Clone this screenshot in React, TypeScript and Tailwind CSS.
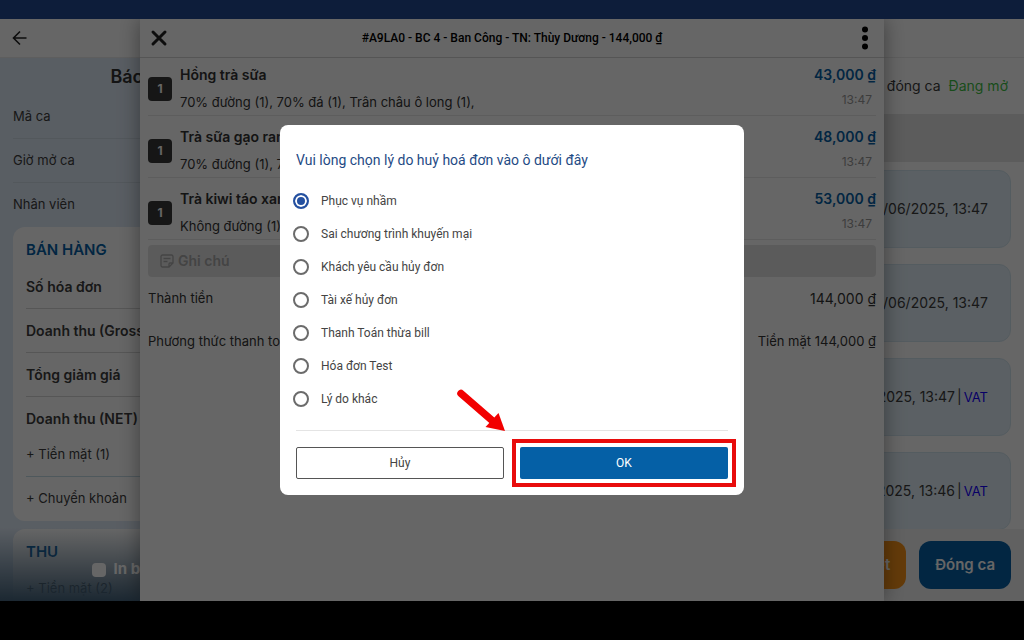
import React, { useState } from "react"

const ITEMS = [
  { name: "Hồng trà sữa", options: "70% đường (1), 70% đá (1), Trân châu ô long (1),", price: "43,000 ₫" },
  { name: "Trà sữa gạo rang", options: "70% đường (1), 70% đá (1),", price: "48,000 ₫" },
  { name: "Trà kiwi táo xanh", options: "Không đường (1),", price: "53,000 ₫" },
]

const REASONS = [
  "Phục vụ nhầm",
  "Sai chương trình khuyến mại",
  "Khách yêu cầu hủy đơn",
  "Tài xế hủy đơn",
  "Thanh Toán thừa bill",
  "Hóa đơn Test",
  "Lý do khác",
]

const INVOICES = [
  { id: 1, time: "23/06/2025, 13:47", vat: false },
  { id: 2, time: "23/06/2025, 13:47", vat: false },
  { id: 3, time: "23/06/2025, 13:47", vat: true },
  { id: 4, time: "23/06/2025, 13:46", vat: true },
]

const ShiftReport = () => (
  <section className="relative w-[316px] shrink-0 overflow-hidden bg-[#dfeaf7] px-[13px] text-[13px] text-[#3c3c3c]">
    <h1 className="flex h-[37px] items-center justify-center text-lg font-semibold text-[#333]">
      Báo cáo ca
    </h1>
    <div className="divide-y divide-[#cfdbe6]">
      {["Mã ca", "Giờ mở ca", "Nhân viên"].map((label) => (
        <div key={label} className="flex h-11 items-center">
          {label}
        </div>
      ))}
    </div>

    <div className="rounded-xl bg-white px-[13px]">
      <h2 className="flex h-[38px] items-end pb-1 text-[15px] font-semibold text-[#0560a6]">BÁN HÀNG</h2>
      <div className="divide-y divide-[#d8d8d8] text-sm font-semibold">
        {["Số hóa đơn", "Doanh thu (Gross)", "Tổng giảm giá"].map((label) => (
          <div key={label} className="flex h-11 items-center">
            {label}
          </div>
        ))}
        <div className="flex h-9 items-end pb-1">Doanh thu (NET)</div>
      </div>
      <div className="divide-y divide-[#c4dbe6]">
        <div className="flex h-11 items-center">+ Tiền mặt (1)</div>
        <div className="flex h-11 items-center">+ Chuyển khoản</div>
      </div>
    </div>

    <div className="mt-2 rounded-xl bg-white px-[13px]">
      <h2 className="flex h-[38px] items-end pb-1 text-[15px] font-semibold text-[#0560a6]">THU</h2>
      <div className="flex h-11 items-center">+ Tiền mặt (2)</div>
    </div>

    <div className="absolute inset-x-0 bottom-0 flex h-[73px] items-center justify-center bg-linear-to-b from-[#46647d]/0 to-[#46647d] pt-2.5">
      <label className="flex items-center gap-2 text-[15px] font-bold text-white">
        <input type="checkbox" className="size-3.5 appearance-none rounded-sm bg-white" />
        In báo cáo món
      </label>
    </div>
  </section>
)

const InvoiceList = () => (
  <section className="flex min-w-0 flex-1 flex-col bg-white text-sm text-[#3c3c3c]">
    <div className="flex h-14 shrink-0 items-center justify-end gap-2 px-4">
      <span>Chưa đóng ca</span>
      <span className="text-[#3fbf45]">Đang mở</span>
    </div>
    <div className="h-12 shrink-0 bg-[#e6e6e6]" />
    <div className="flex min-h-0 flex-1 flex-col gap-4 overflow-hidden px-[13px] pt-2">
      {INVOICES.map((invoice) => (
        <div
          key={invoice.id}
          className="flex h-[78px] shrink-0 items-center justify-end gap-0.5 rounded-xl border border-[#d3e5f0] bg-[#e3f0f9] px-[22px]"
        >
          <span>{invoice.time}</span>
          {invoice.vat && <span>|</span>}
          {invoice.vat && (
            <a href="#vat" className="text-[13px] text-[#1500ff]">
              VAT
            </a>
          )}
        </div>
      ))}
    </div>
    <div className="flex h-[72px] shrink-0 items-center justify-end gap-[13px] bg-[#f3f3f3] px-[13px] text-[15px] font-semibold text-white">
      <button className="h-12 rounded-xl bg-[#fa9419] px-4">Chi tiết</button>
      <button className="h-12 rounded-xl bg-[#0560a6] px-4">Đóng ca</button>
    </div>
  </section>
)

const OrderDrawer = () => (
  <aside className="absolute inset-y-0 left-1/2 w-[744px] max-w-full -translate-x-1/2 bg-white text-[13px] text-[#333] shadow-[0_0_20px_rgba(0,0,0,0.4)]">
    <header className="flex h-[39px] items-center justify-between border-b border-[#d4d4d4] px-2.5">
      <button aria-label="Đóng">
        <svg className="size-[18px]" viewBox="0 0 18 18" fill="none" stroke="#222" strokeWidth="3" strokeLinecap="round">
          <path d="M3 3l12 12M15 3L3 15" />
        </svg>
      </button>
      <h2 className="font-[Roboto,sans-serif] text-xs font-medium text-black">
        #A9LA0 - BC 4 - Ban Công - TN: Thùy Dương - 144,000 ₫
      </h2>
      <button aria-label="Thêm">
        <svg className="h-6 w-[18px]" viewBox="0 0 18 24" fill="#000">
          <circle cx="9" cy="3.5" r="3" />
          <circle cx="9" cy="12" r="3" />
          <circle cx="9" cy="20.5" r="3" />
        </svg>
      </button>
    </header>

    <div className="-mt-1 px-2">
      {ITEMS.map((item) => (
        <div key={item.name} className="flex h-[62px] items-center gap-2 border-b border-[#e8e8e8] pt-2">
          <span className="flex size-6 items-center justify-center rounded bg-[#383838] text-xs font-bold text-white">
            1
          </span>
          <div className="flex flex-1 flex-col gap-[7px]">
            <div className="flex justify-between text-sm leading-5 font-semibold">
              <span>{item.name}</span>
              <span className="text-[#0560a6]">{item.price}</span>
            </div>
            <div className="flex justify-between leading-5">
              <span>{item.options}</span>
              <span className="pr-1 text-xs leading-4 text-[#999]">13:47</span>
            </div>
          </div>
        </div>
      ))}
      <div className="mt-[5px] flex h-8 items-center gap-1 rounded bg-[#e4e4e4] px-3 text-sm font-semibold text-[#aaa]">
        <svg className="size-3.5" viewBox="0 0 14 14" fill="none" stroke="currentColor" strokeWidth="1.3">
          <path d="M2.5 1h9A1.5 1.5 0 0 1 13 2.5V9l-4 4H2.5A1.5 1.5 0 0 1 1 11.5v-9A1.5 1.5 0 0 1 2.5 1zM13 9H10a1 1 0 0 0-1 1v3M3.5 4.5h7M3.5 7.5h4" />
        </svg>
        Ghi chú
      </div>
      <div className="flex h-[43px] items-center justify-between">
        <span>Thành tiền</span>
        <span className="text-sm">144,000 ₫</span>
      </div>
      <div className="flex h-[43px] items-center justify-between">
        <span>Phương thức thanh toán</span>
        <span>Tiền mặt 144,000 ₫</span>
      </div>
    </div>
  </aside>
)

const CancelDialog = () => {
  const [reason, setReason] = useState<string>(REASONS[0])

  return (
    <div
      role="dialog"
      aria-labelledby="cancel-title"
      className="relative w-[464px] rounded-lg bg-white p-4 font-[Roboto,sans-serif] text-[#444]"
    >
      <h2 id="cancel-title" className="pt-[9px] pb-[14px] text-sm leading-5 text-[#1f4b85]">
        Vui lòng chọn lý do huỷ hoá đơn vào ô dưới đây
      </h2>
      <div className="-ml-[3px] pb-[15px]">
        {REASONS.map((item) => (
          <label key={item} className="flex h-[33px] items-center gap-3 text-xs">
            <input
              type="radio"
              name="reason"
              checked={reason === item}
              onChange={() => setReason(item)}
              className="size-4 appearance-none rounded-full border-2 border-[#6b6b6b] checked:border-[#2450a0] checked:bg-[#2450a0] checked:shadow-[inset_0_0_0_2px_white]"
            />
            {item}
          </label>
        ))}
      </div>
      <div className="grid grid-cols-2 gap-4 border-t border-[#e4e4e4] pt-4 text-xs">
        <button className="h-8 rounded-xs border border-[#555]">Hủy</button>
        <div className="relative">
          <button className="h-8 w-full rounded-xs bg-[#0560a6] text-white">OK</button>
          <div className="pointer-events-none absolute -inset-2 border-4 border-[#e80c0c]" />
          <svg className="pointer-events-none absolute -top-[60px] -left-[65px] h-12 w-[52px]" viewBox="0 0 52 48">
            <path d="M6 6.5L40 36" stroke="#f20000" strokeWidth="7.5" strokeLinecap="round" />
            <path d="M50 44L43.5 26L30.5 40z" fill="#f20000" />
          </svg>
        </div>
      </div>
    </div>
  )
}

export default function App() {
  return (
    <div className="relative flex h-screen flex-col overflow-hidden bg-black font-[Inter,sans-serif]">
      <div className="h-[19px] shrink-0 bg-[#214991]" />
      <main className="relative flex min-h-0 flex-1 flex-col overflow-hidden bg-white">
        <header className="flex h-[39px] shrink-0 items-center border-b border-[#ececec] px-3">
          <button aria-label="Quay lại">
            <svg className="size-4" viewBox="0 0 16 16" fill="none" stroke="#222" strokeWidth="1.6">
              <path d="M14.5 8H1.5M8 1.5L1.5 8L8 14.5" />
            </svg>
          </button>
        </header>
        <div className="flex min-h-0 flex-1">
          <ShiftReport />
          <InvoiceList />
        </div>
        <OrderDrawer />
      </main>
      <div className="h-[39px] shrink-0 bg-black" />
      <div className="absolute inset-0 flex items-center justify-center bg-black/60 pb-5">
        <CancelDialog />
      </div>
    </div>
  )
}
